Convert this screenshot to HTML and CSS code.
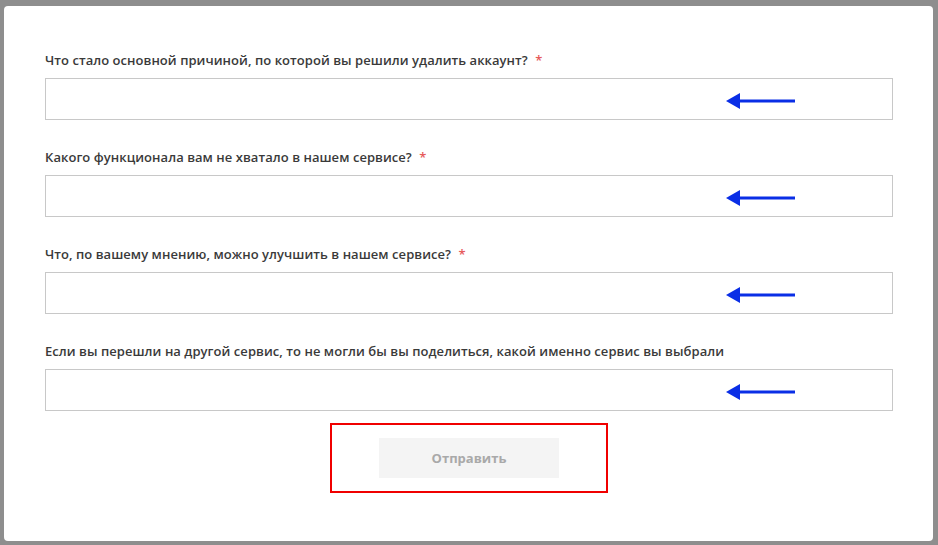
FILE: index.html
```html
<!DOCTYPE html>
<html>
<head>
    <meta charset="UTF-8">
    <title>Удаление аккаунта</title>
    <link rel="stylesheet" href="styles.css">
</head>
<body>
    <div class="modal">
        <form class="survey">
            <div class="field">
                <label>Что стало основной причиной, по которой вы решили удалить аккаунт? <span class="req">*</span></label>
                <div class="input-wrap">
                    <input type="text">
                    <svg class="arrow" width="70" height="18" viewBox="0 0 70 18"><path d="M0 9 L14 1 L14 17 Z" fill="#0a2ee6"/><rect x="10" y="7.5" width="59" height="3" fill="#0a2ee6"/></svg>
                </div>
            </div>
            <div class="field">
                <label>Какого функционала вам не хватало в нашем сервисе? <span class="req">*</span></label>
                <div class="input-wrap">
                    <input type="text">
                    <svg class="arrow" width="70" height="18" viewBox="0 0 70 18"><path d="M0 9 L14 1 L14 17 Z" fill="#0a2ee6"/><rect x="10" y="7.5" width="59" height="3" fill="#0a2ee6"/></svg>
                </div>
            </div>
            <div class="field">
                <label>Что, по вашему мнению, можно улучшить в нашем сервисе? <span class="req">*</span></label>
                <div class="input-wrap">
                    <input type="text">
                    <svg class="arrow" width="70" height="18" viewBox="0 0 70 18"><path d="M0 9 L14 1 L14 17 Z" fill="#0a2ee6"/><rect x="10" y="7.5" width="59" height="3" fill="#0a2ee6"/></svg>
                </div>
            </div>
            <div class="field last">
                <label>Если вы перешли на другой сервис, то не могли бы вы поделиться, какой именно сервис вы выбрали</label>
                <div class="input-wrap">
                    <input type="text">
                    <svg class="arrow" width="70" height="18" viewBox="0 0 70 18"><path d="M0 9 L14 1 L14 17 Z" fill="#0a2ee6"/><rect x="10" y="7.5" width="59" height="3" fill="#0a2ee6"/></svg>
                </div>
            </div>
            <div class="actions">
                <div class="highlight">
                    <button type="button" disabled>Отправить</button>
                </div>
            </div>
        </form>
    </div>
</body>
</html>
```
FILE: styles.css
```css
/* dimmed page behind the dialog */
body {
    margin: 0;
    background-color: #8e8e8e;
    font-family: "Open Sans", "Noto Sans", sans-serif;
}

/* white dialog box */
.modal {
    background-color: #ffffff;
    margin: 6px 5px 0 4px;
    height: 535px;
    border-radius: 4px;
    padding: 45px 40px 0 41px;
    box-sizing: border-box;
}

.field {
    margin-bottom: 28px;
}

.field.last {
    margin-bottom: 12px;
}

label {
    display: block;
    color: #3a3a3a;
    font-size: 13px;
    font-weight: 600;
    line-height: 18px;
    margin-bottom: 9px;
    letter-spacing: 0.05px;
}

.req {
    color: #e65a5a;
    margin-left: 4px;
}

.input-wrap {
    position: relative;
}

input {
    display: block;
    width: 100%;
    height: 42px;
    box-sizing: border-box;
    border: 1px solid #c8c8c8;
    border-radius: 0;
    padding: 0 12px;
    font-size: 14px;
}

/* annotation arrows drawn over the inputs */
.arrow {
    position: absolute;
    left: 681px;
    top: 14px;
}

.actions {
    display: flex;
    justify-content: center;
}

/* red annotation frame around the button */
.highlight {
    border: 2px solid #f00000;
    width: 278px;
    height: 70px;
    box-sizing: border-box;
    display: flex;
    justify-content: center;
    align-items: center;
}

button {
    width: 180px;
    height: 40px;
    border: none;
    background-color: #f4f4f4;
    color: #a9a9a9;
    font-family: "Open Sans", "Noto Sans", sans-serif;
    font-size: 13px;
    font-weight: 700;
}
```
